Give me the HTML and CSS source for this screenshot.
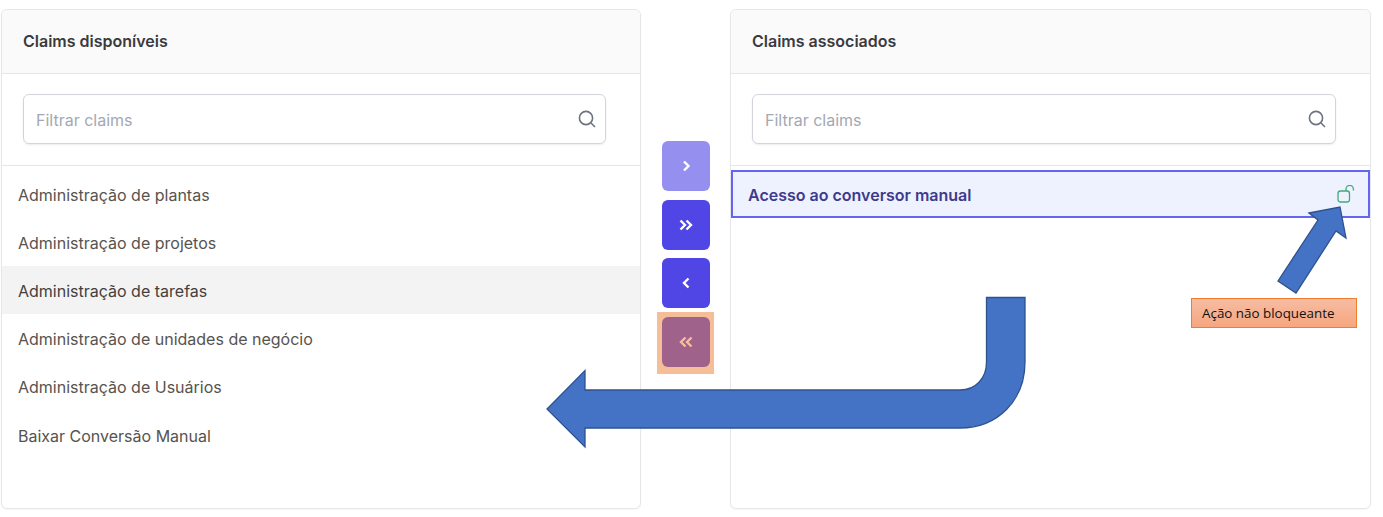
FILE: index.html
```html
<!DOCTYPE html>
<html lang="pt-BR">
<head>
  <meta charset="UTF-8">
  <title>Claims</title>
  <link rel="stylesheet" href="styles.css">
</head>
<body>
  <div class="transfer">
    <section class="panel panel-left">
      <h2 class="panel-header">Claims disponíveis</h2>
      <div class="search">
        <div class="search-box">
          <span class="search-text">Filtrar claims</span>
          <svg class="search-icon" viewBox="0 0 20 20"><circle cx="9" cy="9" r="6.600"/><path d="M14 14l4 4"/></svg>
        </div>
      </div>
      <ul class="list">
        <li class="item">Administração de plantas</li>
        <li class="item">Administração de projetos</li>
        <li class="item item-hover">Administração de tarefas</li>
        <li class="item">Administração de unidades de negócio</li>
        <li class="item">Administração de Usuários</li>
        <li class="item">Baixar Conversão Manual</li>
      </ul>
    </section>

    <div class="actions">
      <button class="action action-disabled"><svg viewBox="0 0 16 16"><path d="M6 3.500l4.500 4.500L6 12.500"/></svg></button>
      <button class="action"><svg viewBox="0 0 16 16"><path d="M2.500 3.500L7 8l-4.500 4.500M8.500 3.500L13 8l-4.500 4.500"/></svg></button>
      <button class="action"><svg viewBox="0 0 16 16"><path d="M10.500 3.500L6 8l4.500 4.500"/></svg></button>
      <button class="action"><svg viewBox="0 0 16 16"><path d="M7.500 3.500L3 8l4.500 4.500M13.500 3.500L9 8l4.500 4.500"/></svg></button>
    </div>

    <section class="panel panel-right">
      <h2 class="panel-header">Claims associados</h2>
      <div class="search">
        <div class="search-box">
          <span class="search-text">Filtrar claims</span>
          <svg class="search-icon" viewBox="0 0 20 20"><circle cx="9" cy="9" r="6.600"/><path d="M14 14l4 4"/></svg>
        </div>
      </div>
      <ul class="list">
        <li class="item item-selected">
          <span>Acesso ao conversor manual</span>
          <svg class="lock-icon" viewBox="0 0 18 18"><rect x="1" y="6" width="11.500" height="11" rx="2.500"/><path d="M9 6V4a3.700 3.700 0 0 1 7.400 0v1.500"/></svg>
        </li>
      </ul>
    </section>
  </div>

  <!-- annotations drawn over the screenshot -->
  <div class="highlight"></div>
  <svg class="arrows" viewBox="0 0 1383 517">
    <path d="M986.500 297.500H1025V362C1025 400 998 428 960 428H585V447L547 409L585 370.500V390H960C976 390 986.500 378 986.500 362Z"/>
    <path d="M1309 213L1340 207L1346 238L1336 231L1296 293L1278 281L1318 220Z"/>
  </svg>
  <div class="note">Ação não bloqueante</div>
</body>
</html>
```

FILE: styles.css
```css
body {
  margin: 0;
  font-family: Inter, Arial, sans-serif;
  background: white;
  height: 517px;
  overflow: hidden;
}

.transfer {
  display: flex;
  align-items: stretch;
  height: 500px;
  padding: 9px 12px 8px 1px;
}

.panel {
  width: 640px;
  box-sizing: border-box;
  background: white;
  border: 1px solid #e5e7eb;
  border-radius: 6px;
  box-shadow: 0 1px 2px rgba(0, 0, 0, 0.04);
}

.panel-right {
  width: 641px;
}

.panel-header {
  margin: 0;
  height: 64px;
  box-sizing: border-box;
  padding: 0 0 1px 21px;
  display: flex;
  align-items: center;
  font-size: 16px;
  font-weight: 600;
  color: #3a3a3f;
  background: #fafafa;
  border-bottom: 1px solid #e5e7eb;
  border-radius: 6px 6px 0 0;
}

.search {
  padding: 20px 34px 21px 21px;
  border-bottom: 1px solid #e5e7eb;
}

.search-box {
  height: 50px;
  box-sizing: border-box;
  display: flex;
  align-items: center;
  justify-content: space-between;
  padding: 0 8px 0 12px;
  border: 1px solid #d1d5db;
  border-radius: 6px;
  box-shadow: 0 1px 2px rgba(0, 0, 0, 0.08);
}

.search-text {
  padding-top: 2px;
  font-size: 16px;
  color: #a3a8b3;
}

.search-icon {
  width: 20px;
  height: 20px;
  fill: none;
  stroke: #6b7280;
  stroke-width: 1.6;
}

.list {
  list-style: none;
  margin: 4px 0 0;
  padding: 0;
}

.item {
  height: 48.100px;
  box-sizing: border-box;
  padding: 2px 0 0 16px;
  display: flex;
  align-items: center;
  font-size: 16px;
  color: #57534e;
}

.item-hover {
  background: #f3f3f3;
  color: #44403c;
}

.item-selected {
  justify-content: space-between;
  padding: 0 13px 0 15px;
  border: 2px solid #6366f1;
  background: #eef2ff;
  color: #3f3a8c;
  font-weight: 600;
}

.item-selected span {
  padding-top: 2px;
}

.lock-icon {
  width: 18px;
  height: 18px;
  fill: none;
  stroke: #46a878;
  stroke-width: 1.300;
}

.actions {
  width: 89px;
  flex-shrink: 0;
  display: flex;
  flex-direction: column;
  align-items: center;
  gap: 8.500px;
  padding-top: 132px;
  box-sizing: border-box;
}

.action {
  width: 48px;
  height: 50px;
  padding: 0;
  flex-shrink: 0;
  display: flex;
  align-items: center;
  justify-content: center;
  background: #4f46e5;
  border: none;
  border-radius: 6px;
}

.action-disabled {
  background: #9590ef;
}

.action svg {
  width: 16px;
  height: 16px;
  fill: none;
  stroke: white;
  stroke-width: 2.400;
}

.highlight {
  position: absolute;
  left: 657px;
  top: 312px;
  width: 57px;
  height: 62px;
  background: rgba(237, 125, 49, 0.5);
}

.arrows {
  position: absolute;
  left: 0;
  top: 0;
  width: 1383px;
  height: 517px;
  fill: #4472c4;
  stroke: #2f528f;
  stroke-width: 1.300;
}

.note {
  position: absolute;
  left: 1191px;
  top: 298px;
  width: 166px;
  height: 30px;
  box-sizing: border-box;
  padding-left: 10px;
  display: flex;
  align-items: center;
  font-family: "Open Sans", Arial, sans-serif;
  font-size: 13.400px;
  color: #111;
  background: linear-gradient(#f7bca3, #f6a67f);
  border: 1px solid #ed7d31;
}
```
